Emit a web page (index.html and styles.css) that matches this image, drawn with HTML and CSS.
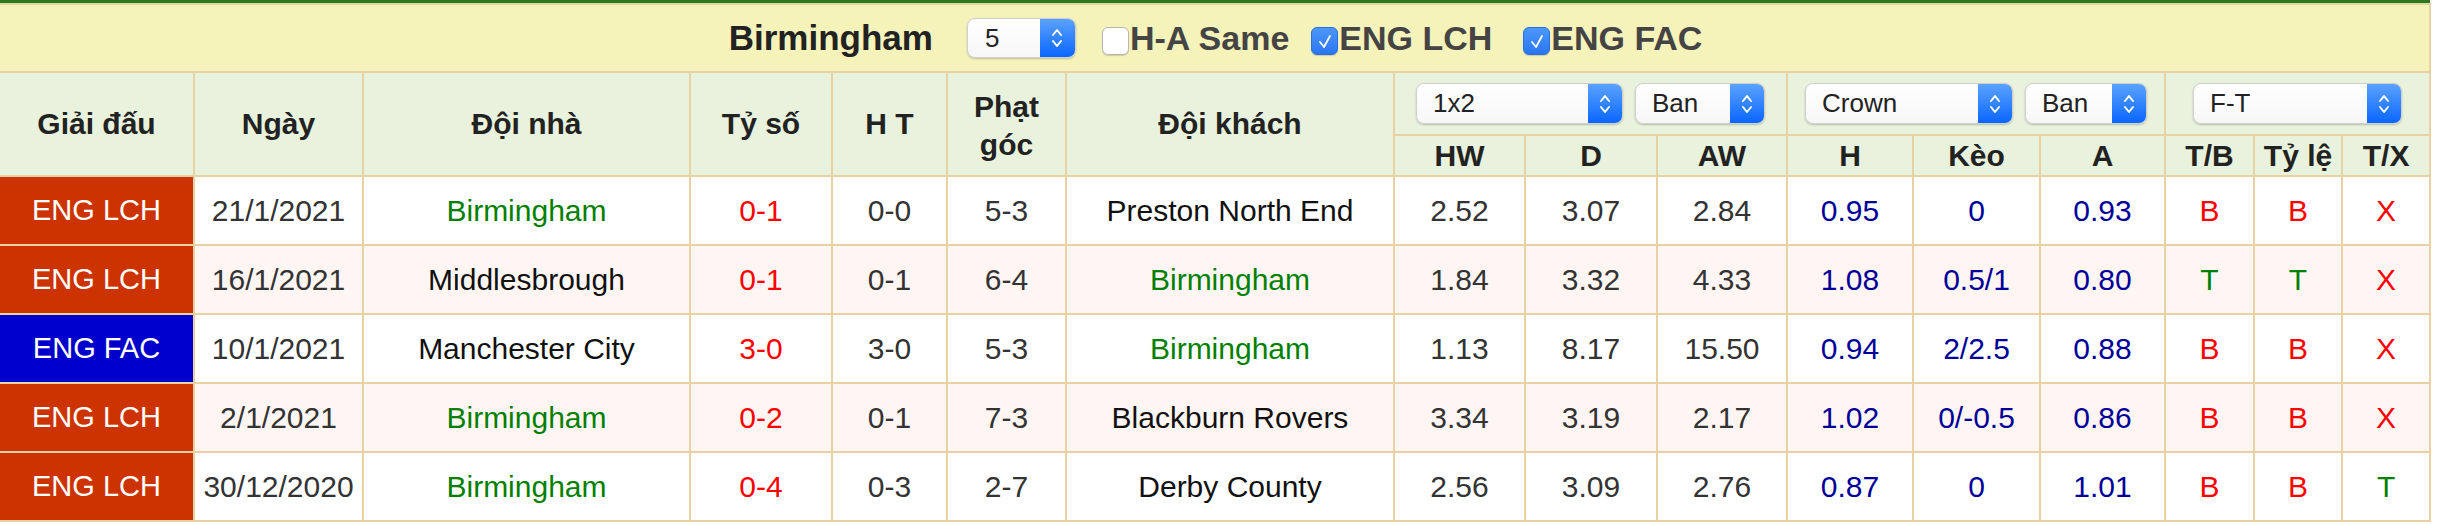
FILE: index.html
```html
<!DOCTYPE html>
<html lang="vi">
<head>
<meta charset="utf-8">
<title>Birmingham</title>
<link rel="stylesheet" href="styles.css">
</head>
<body>
<div class="wrap">
<table class="tbl">
<colgroup>
<col class="c1"><col class="c2"><col class="c3"><col class="c4"><col class="c5"><col class="c6"><col class="c7"><col class="c8"><col class="c9"><col class="c10"><col class="c11"><col class="c12"><col class="c13"><col class="c14"><col class="c15"><col class="c16">
</colgroup>
<thead>
<tr class="bar">
<td colspan="16" class="first">
<div class="bar-in">
<span class="team">Birmingham</span>
<span class="sel sel-num"><span class="sel-txt">5</span><span class="step"><svg viewBox="0 0 14 28" width="14" height="28"><polyline points="3,11 7,6 11,11"/><polyline points="3,17 7,22 11,17"/></svg></span></span>
<label class="chk c-a"><span class="box"></span>H-A Same</label>
<label class="chk c-b"><span class="box on"><svg viewBox="0 0 20 20" width="20" height="20"><polyline points="5,11 9,16 15,5"/></svg></span>ENG LCH</label>
<label class="chk c-c"><span class="box on"><svg viewBox="0 0 20 20" width="20" height="20"><polyline points="5,11 9,16 15,5"/></svg></span>ENG FAC</label>
</div>
</td>
</tr>
<tr class="h1">
<th rowspan="2" class="first">Giải đấu</th>
<th rowspan="2">Ngày</th>
<th rowspan="2">Đội nhà</th>
<th rowspan="2">Tỷ số</th>
<th rowspan="2">H T</th>
<th rowspan="2" class="two">Phạt<br>góc</th>
<th rowspan="2">Đội khách</th>
<th colspan="3"><div class="sels">
<span class="sel w207"><span class="sel-txt">1x2</span><span class="step"><svg viewBox="0 0 14 28" width="14" height="28"><polyline points="3,11 7,6 11,11"/><polyline points="3,17 7,22 11,17"/></svg></span></span>
<span class="sel w130"><span class="sel-txt">Ban</span><span class="step"><svg viewBox="0 0 14 28" width="14" height="28"><polyline points="3,11 7,6 11,11"/><polyline points="3,17 7,22 11,17"/></svg></span></span>
</div></th>
<th colspan="3"><div class="sels">
<span class="sel w208"><span class="sel-txt">Crown</span><span class="step"><svg viewBox="0 0 14 28" width="14" height="28"><polyline points="3,11 7,6 11,11"/><polyline points="3,17 7,22 11,17"/></svg></span></span>
<span class="sel w122"><span class="sel-txt">Ban</span><span class="step"><svg viewBox="0 0 14 28" width="14" height="28"><polyline points="3,11 7,6 11,11"/><polyline points="3,17 7,22 11,17"/></svg></span></span>
</div></th>
<th colspan="3"><div class="sels">
<span class="sel w209"><span class="sel-txt">F-T</span><span class="step"><svg viewBox="0 0 14 28" width="14" height="28"><polyline points="3,11 7,6 11,11"/><polyline points="3,17 7,22 11,17"/></svg></span></span>
</div></th>
</tr>
<tr class="h2">
<th>HW</th><th>D</th><th>AW</th><th>H</th><th>Kèo</th><th>A</th><th>T/B</th><th>Tỷ lệ</th><th>T/X</th>
</tr>
</thead>
<tbody>
<tr>
<td class="first lg lch">ENG LCH</td><td class="g">21/1/2021</td><td class="me">Birmingham</td><td class="sc">0-1</td><td class="g">0-0</td><td class="g">5-3</td><td class="tm">Preston North End</td><td class="g">2.52</td><td class="g">3.07</td><td class="g">2.84</td><td class="nv">0.95</td><td class="nv">0</td><td class="nv">0.93</td><td class="r">B</td><td class="r">B</td><td class="r">X</td>
</tr>
<tr class="alt">
<td class="first lg lch">ENG LCH</td><td class="g">16/1/2021</td><td class="tm">Middlesbrough</td><td class="sc">0-1</td><td class="g">0-1</td><td class="g">6-4</td><td class="me">Birmingham</td><td class="g">1.84</td><td class="g">3.32</td><td class="g">4.33</td><td class="nv">1.08</td><td class="nv">0.5/1</td><td class="nv">0.80</td><td class="gr">T</td><td class="gr">T</td><td class="r">X</td>
</tr>
<tr>
<td class="first lg fac">ENG FAC</td><td class="g">10/1/2021</td><td class="tm">Manchester City</td><td class="sc">3-0</td><td class="g">3-0</td><td class="g">5-3</td><td class="me">Birmingham</td><td class="g">1.13</td><td class="g">8.17</td><td class="g">15.50</td><td class="nv">0.94</td><td class="nv">2/2.5</td><td class="nv">0.88</td><td class="r">B</td><td class="r">B</td><td class="r">X</td>
</tr>
<tr class="alt">
<td class="first lg lch">ENG LCH</td><td class="g">2/1/2021</td><td class="me">Birmingham</td><td class="sc">0-2</td><td class="g">0-1</td><td class="g">7-3</td><td class="tm">Blackburn Rovers</td><td class="g">3.34</td><td class="g">3.19</td><td class="g">2.17</td><td class="nv">1.02</td><td class="nv">0/-0.5</td><td class="nv">0.86</td><td class="r">B</td><td class="r">B</td><td class="r">X</td>
</tr>
<tr>
<td class="first lg lch">ENG LCH</td><td class="g">30/12/2020</td><td class="me">Birmingham</td><td class="sc">0-4</td><td class="g">0-3</td><td class="g">2-7</td><td class="tm">Derby County</td><td class="g">2.56</td><td class="g">3.09</td><td class="g">2.76</td><td class="nv">0.87</td><td class="nv">0</td><td class="nv">1.01</td><td class="r">B</td><td class="r">B</td><td class="gr">T</td>
</tr>
</tbody>
</table>
</div>
</body>
</html>
```

FILE: styles.css
```css
* { box-sizing: border-box; }
html, body { margin: 0; padding: 0; background: #fff; }
body { font-family: "Liberation Sans", Arial, sans-serif; }

.wrap { width: 2430px; border-top: 3px solid #2c7a1c; }

.tbl {
  width: 2430px;
  table-layout: fixed;
  border-collapse: collapse;
  font-size: 30px;
}
.tbl td, .tbl th {
  border: 2px solid #e8d2a4;
  padding: 0;
  text-align: center;
  vertical-align: middle;
  white-space: nowrap;
}
.tbl .first { border-left: 0; }

.c1 { width: 194px; } .c2 { width: 169px; } .c3 { width: 327px; } .c4 { width: 142px; }
.c5 { width: 115px; } .c6 { width: 119px; } .c7 { width: 328px; } .c8 { width: 131px; }
.c9 { width: 132px; } .c10 { width: 130px; } .c11 { width: 126px; } .c12 { width: 127px; }
.c13 { width: 125px; } .c14 { width: 89px; } .c15 { width: 88px; } .c16 { width: 88px; }

/* top bar */
.bar td { background: #f5f2ba; height: 68px; border-top: 2px solid #e8d2a4; }
.bar-in { display: flex; justify-content: center; align-items: center; padding-left: 2px; }
.team { font-weight: bold; font-size: 35px; color: #222; margin-right: 34px; }
.chk { display: inline-flex; align-items: center; font-weight: bold; font-size: 34px; color: #444; }
.c-a { margin-left: 26px; }
.c-b { margin-left: 22px; }
.c-c { margin-left: 31px; }
.box {
  width: 27px; height: 28px; border-radius: 6px; margin-top: 5px; margin-right: 1px;
  background: #fff; border: 1px solid #b5b5b5; box-shadow: 0 1px 1px rgba(0,0,0,0.15);
  display: inline-flex; align-items: center; justify-content: center;
}
.box.on { background: linear-gradient(#4c97fa, #2a76f2); border-color: #2a6fe0; }
.box svg polyline { fill: none; stroke: #fff; stroke-width: 1.8; stroke-linecap: round; stroke-linejoin: round; }

/* select look-alike */
.sel {
  display: inline-flex; align-items: stretch; height: 41px;
  background: linear-gradient(#ffffff, #f7f7f7);
  border: 1px solid #cfcfcf; border-radius: 8px;
  box-shadow: 0 1px 2px rgba(0,0,0,0.22);
  overflow: hidden; text-align: left;
}
.sel-txt { flex: 1; font-size: 26px; font-weight: normal; color: #222; padding-left: 16px; line-height: 39px; }
.step {
  width: 34px; display: flex; align-items: center; justify-content: center;
  background: linear-gradient(#5ba2ff, #0a66ff);
}
.step svg polyline { fill: none; stroke: #fff; stroke-width: 2; stroke-linecap: round; stroke-linejoin: round; }
.sel-num { width: 109px; height: 40px; }
.sel-num .sel-txt { padding-left: 17px; }
.sel-num .step { width: 35px; }
.w207 { width: 207px; } .w130 { width: 130px; } .w208 { width: 208px; } .w122 { width: 122px; } .w209 { width: 209px; }
.sels { display: flex; justify-content: center; gap: 12px; }

/* headers */
.h1 th, .h2 th { background: #e9f2dc; color: #222; font-weight: bold; font-size: 30px; }
.h1 th { height: 63px; }
.h2 th { height: 41px; font-size: 30px; }
.h1 th.two { white-space: normal; line-height: 38px; padding-top: 3px; }

/* body */
tbody td { height: 69px; background: #fff; color: #333; }
tbody tr.alt td { background: #fff6f4; }
tbody td.lg { color: #fff; font-size: 29px; }
tbody td.lch, tbody tr.alt td.lch { background: #cc3300; }
tbody td.fac { background: #0000cc; }
.g { color: #333; }
.tm { color: #111; }
.me { color: #008000; }
.sc { color: #ff0000; }
.nv { color: #000099; }
.r { color: #ff0000; }
.gr { color: #008000; }
```
